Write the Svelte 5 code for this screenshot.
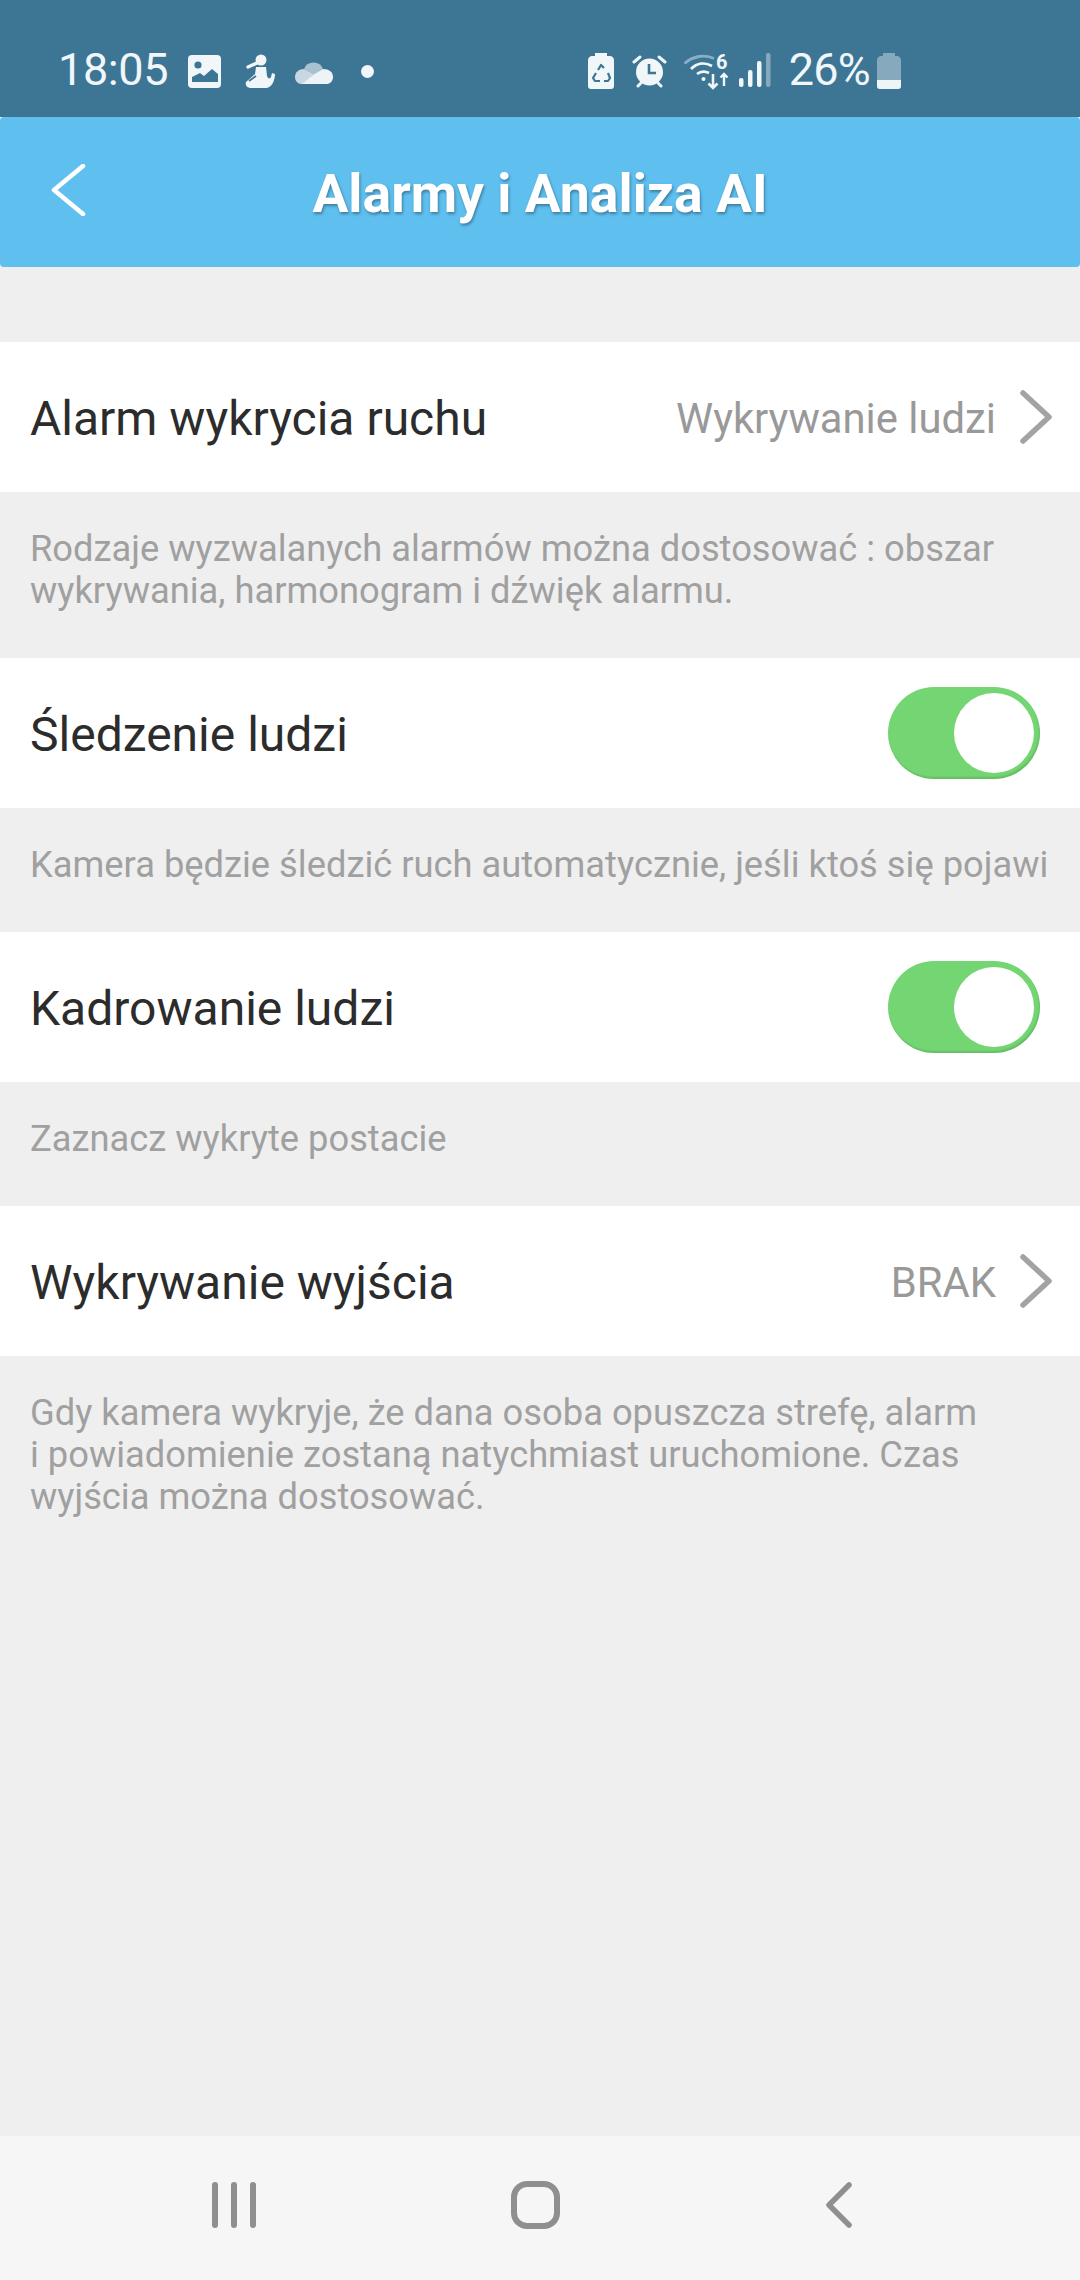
<script>
	const rows = [
		{ label: 'Alarm wykrycia ruchu', value: 'Wykrywanie ludzi', note: ['Rodzaje wyzwalanych alarmów można dostosować : obszar', 'wykrywania, harmonogram i dźwięk alarmu.'] },
		{ label: 'Śledzenie ludzi', toggle: true, note: ['Kamera będzie śledzić ruch automatycznie, jeśli ktoś się pojawi'] },
		{ label: 'Kadrowanie ludzi', toggle: true, note: ['Zaznacz wykryte postacie'] },
		{ label: 'Wykrywanie wyjścia', value: 'BRAK', note: ['Gdy kamera wykryje, że dana osoba opuszcza strefę, alarm', 'i powiadomienie zostaną natychmiast uruchomione. Czas', 'wyjścia można dostosować.'] },
	];
</script>

<div class="page">
	<div class="status">
		<span class="time">18:05</span>
		<svg class="ic pic" width="34" height="34" viewBox="0 0 34 34">
			<rect width="33" height="33" rx="4" fill="#f1f6f9" />
			<circle cx="10" cy="10" r="3.6" fill="#3d7595" />
			<path d="M4 27v-5l8-4 4 3 8-7 6 5v8z" fill="#3d7595" />
		</svg>
		<svg class="ic person" width="30" height="34" viewBox="0 0 30 34">
			<circle cx="16" cy="6" r="5.5" fill="#f1f6f9" />
			<path d="M3 13l9-4" stroke="#f1f6f9" stroke-width="3.4" stroke-linecap="round" />
			<path d="M11 13h10l1 9c1 3 3 3 4 1l1-4 3 1c0 6-3 13-8 14H6c-4 0-6-3-5-6l9-8z" fill="#f1f6f9" />
			<path d="M4 27l7-5" stroke="#3d7595" stroke-width="1.8" />
		</svg>
		<svg class="ic cloud" width="39" height="26" viewBox="0 0 39 26">
			<path d="M10 10a10 9.500 0 0 1 19 0l-9 5z" fill="#a9c2d1" />
			<path d="M1 18c0-5 4-8 9-8l10 5-11 10H7c-3 0-6-3-6-7z" fill="#c8d8e2" />
			<path d="M8 25l12-10 9-5c6 0 10 3 10 8 0 4-3 7-6 7z" fill="#eef3f7" />
		</svg>
		<span class="dot"></span>
		<span class="spacer"></span>
		<svg class="ic" width="26" height="36" viewBox="0 0 26 36">
			<path d="M7 0h12v3h3c2 0 4 2 4 4v26c0 2-1 3-3 3H3c-2 0-3-1-3-3V7c0-2 2-4 4-4h3z" fill="#f1f6f9" />
			<path d="M10 17l3-5 3 3M8 20l-3 5 2 3h5M20 20l2 5-2 3h-4" fill="none" stroke="#3d7595" stroke-width="2.2" stroke-linejoin="round" />
		</svg>
		<svg class="ic alarm" width="35" height="34" viewBox="0 0 35 34">
			<circle cx="17.500" cy="18" r="13.500" fill="#f1f6f9" />
			<path d="M17 10v9h7" fill="none" stroke="#3d7595" stroke-width="2.600" />
			<path d="M2 8l6-5M33 8l-6-5M6 32l3-3M29 32l-3-3" stroke="#f1f6f9" stroke-width="3" stroke-linecap="round" />
		</svg>
		<svg class="ic wifi" width="46" height="42" viewBox="0 -6 46 42">
			<path d="M1.500 9.500C10 2 22 0 31 4.500" fill="none" stroke="#87b0c6" stroke-width="2.800" />
			<path d="M8 15c6-6 14-7 21-3M14 20c4-3 8-3 12-1" fill="none" stroke="#f1f6f9" stroke-width="2.800" />
			<circle cx="20.500" cy="25" r="2" fill="#f1f6f9" />
			<path d="M30 20v14M25.500 29.500l4.500 4.500 4.500-4.500" fill="none" stroke="#f1f6f9" stroke-width="2.600" />
			<path d="M41 32V20M37.500 23.500l3.500-3.500 3.500 3.500" fill="none" stroke="#f1f6f9" stroke-width="2.400" />
			<text x="33" y="15" class="six">6</text>
		</svg>
		<svg class="ic signal" width="32" height="34" viewBox="0 0 32 34">
			<rect x="0" y="25" width="4.500" height="9" rx="2" fill="#f1f6f9" />
			<rect x="9" y="17" width="4.500" height="17" rx="2" fill="#f1f6f9" />
			<rect x="18" y="8" width="4.500" height="26" rx="2" fill="#f1f6f9" />
			<rect x="27" y="0" width="4.500" height="34" rx="2" fill="#87a9be" />
		</svg>
		<span class="batt-text">26%</span>
		<svg class="ic batt" width="24" height="36" viewBox="0 0 24 36">
			<path d="M6 0h12v3h2c2 0 4 2 4 4v26c0 2-1 3-3 3H3c-2 0-3-1-3-3V7c0-2 2-4 4-4h2z" fill="#87a9be" />
			<path d="M0 27h24v6c0 2-1 3-3 3H3c-2 0-3-1-3-3z" fill="#eef5f9" />
		</svg>
	</div>

	<header>
		<svg class="back" width="36" height="52" viewBox="0 0 36 52">
			<path d="M33 2L4 26l29 24" fill="none" stroke="#fff" stroke-width="4.500" stroke-linecap="round" stroke-linejoin="round" />
		</svg>
		<h1>Alarmy i Analiza AI</h1>
	</header>

	<main>
		{#each rows as row}
			<div class="row">
				<span class="label">{row.label}</span>
				{#if row.toggle}
					<span class="toggle"><span class="knob"></span></span>
				{:else}
					<span class="value">{row.value}</span>
					<svg class="chev" width="32" height="54" viewBox="0 0 32 54">
						<path d="M3 3l26 24L3 51" fill="none" stroke="#a3a3a3" stroke-width="5.500" stroke-linecap="round" stroke-linejoin="round" />
					</svg>
				{/if}
			</div>
			<div class="note">
				{#each row.note as line}
					<div>{line}</div>
				{/each}
			</div>
		{/each}
	</main>

	<nav>
		<svg width="44" height="46" viewBox="0 0 44 46">
			<path d="M3 3v40M22 3v40M41 3v40" stroke="#8f8f8f" stroke-width="6" stroke-linecap="round" />
		</svg>
		<svg width="49" height="48" viewBox="0 0 49 48">
			<rect x="3" y="3" width="43" height="42" rx="13" fill="none" stroke="#8f8f8f" stroke-width="6" />
		</svg>
		<svg width="27" height="46" viewBox="0 0 27 46">
			<path d="M24 3L4 23l20 20" fill="none" stroke="#8f8f8f" stroke-width="5.500" stroke-linecap="round" stroke-linejoin="round" />
		</svg>
	</nav>
</div>

<style>
	:global(body) {
		margin: 0;
		background: #efefef;
	}

	.page {
		width: 1080px;
		height: 2280px;
		display: flex;
		flex-direction: column;
		font-family: Roboto, "Liberation Sans", sans-serif;
		background: #efefef;
		overflow: hidden;
	}

	.status {
		height: 117px;
		flex: none;
		box-sizing: border-box;
		padding: 53px 179px 0 58px;
		background: #3d7595;
		color: #f1f6f9;
		display: flex;
		align-items: flex-start;
	}

	.time, .batt-text {
		font-size: 45px;
		line-height: 34px;
		letter-spacing: -0.4px;
	}

	.ic { display: block; flex: none; }
	.pic { margin: 2px 0 0 20px; }
	.person { margin: 1px 0 0 23px; }
	.cloud { margin: 6px 0 0 19px; }
	.alarm { margin: 1px 0 0 18px; }
	.wifi { margin: -5px 0 0 16px; }
	.signal { margin: 0 0 0 10px; }
	.batt { margin-left: 7px; }

	.six {
		font-family: Roboto, sans-serif;
		font-size: 20px;
		font-weight: 700;
		fill: #f1f6f9;
	}

	.dot {
		width: 13px;
		height: 13px;
		margin: 12px 0 0 28px;
		border-radius: 50%;
		background: #f1f6f9;
	}

	.spacer { flex: 1; }

	.batt-text {
		margin-left: 18px;
		letter-spacing: -0.8px;
	}

	header {
		height: 150px;
		flex: none;
		background: #5fbfef;
		border-radius: 4px;
		display: flex;
		align-items: center;
		justify-content: center;
		position: relative;
	}

	.back {
		position: absolute;
		left: 50px;
		top: 47px;
	}

	h1 {
		margin: 0;
		padding-top: 2px;
		font-size: 53.500px;
		font-weight: 700;
		color: #fff;
		text-shadow: 1px 2px 3px rgba(0, 0, 0, 0.35);
	}

	main {
		flex: 1;
		padding-top: 75px;
	}

	.row {
		height: 150px;
		box-sizing: border-box;
		padding: 2px 28px 0 30px;
		background: #fff;
		display: flex;
		align-items: center;
	}

	.label {
		flex: 1;
		font-size: 48px;
		color: #2c2c2c;
	}

	.value {
		font-size: 41.800px;
		color: #999;
		margin-right: 24px;
	}

	.chev { margin: -2px 0 0 0; }

	.toggle {
		width: 152px;
		height: 92px;
		margin: -2px 12px 0 0;
		padding: 6px;
		box-sizing: border-box;
		border-radius: 46px;
		background: #74d672;
		box-shadow: inset -1px -2px 2px rgba(0, 0, 0, 0.12);
		display: flex;
		justify-content: flex-end;
	}

	.knob {
		width: 80px;
		height: 80px;
		border-radius: 50%;
		background: #fff;
	}

	.note {
		padding: 36px 30px 46px;
		font-size: 36.300px;
		line-height: 42px;
		color: #a0a0a0;
		white-space: nowrap;
	}

	nav {
		height: 144px;
		flex: none;
		box-sizing: border-box;
		padding-bottom: 6px;
		background: #f6f6f6;
		display: grid;
		grid-template-columns: 212px 43px 256px 49px 265px 27px;
		align-items: center;
	}

	nav svg:nth-child(1) { grid-column: 2; }
	nav svg:nth-child(2) { grid-column: 4; }
	nav svg:nth-child(3) { grid-column: 6; }
</style>
